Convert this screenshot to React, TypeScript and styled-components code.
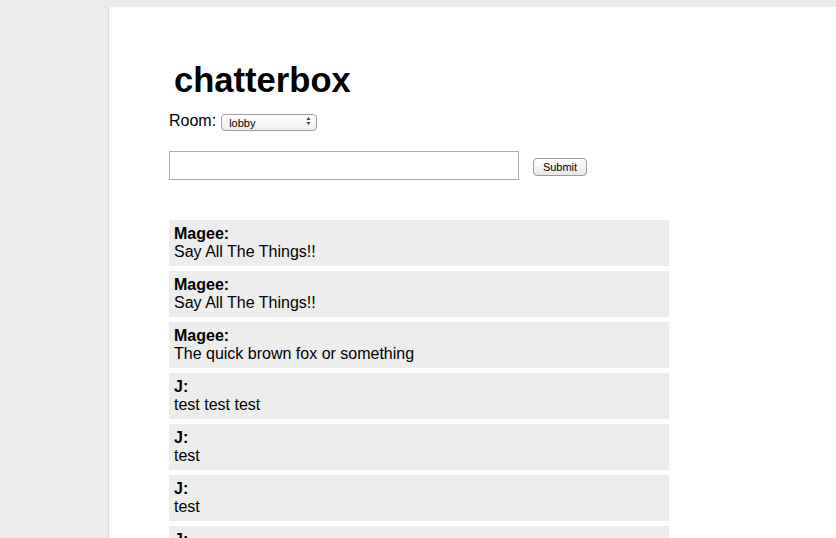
import React from "react";
import styled, { createGlobalStyle } from "styled-components";

const Global = createGlobalStyle`
  html, body {
    margin: 0;
    padding: 0;
    background: #ececec;
    font-family: "Liberation Sans", Arial, Helvetica, sans-serif;
    color: #000;
  }
`;

const Page = styled.div`
  width: 620px;
  min-height: 560px;
  margin: 7px 0 0 108px;
  background: #fff;
  border-left: 1px solid #dcdcdc;
  border-right: 1px solid #dcdcdc;
  padding: 53px 60px 0 60px;
  box-sizing: content-box;
`;

const Title = styled.h1`
  margin: 0 0 0 5px;
  font-size: 34.6px;
  font-weight: bold;
  line-height: 40px;
`;

const RoomRow = styled.div`
  display: flex;
  align-items: center;
  gap: 5px;
  font-size: 16px;
  height: 20px;
  margin-top: 11px;
`;

const SelectWrap = styled.div`
  position: relative;
  width: 96px;
  height: 17px;
`;

const Select = styled.select`
  appearance: none;
  -webkit-appearance: none;
  width: 100%;
  height: 100%;
  box-sizing: border-box;
  border: 1px solid #9c9c9c;
  border-radius: 4px;
  background: linear-gradient(#ffffff, #ededed);
  font-family: "Liberation Sans", Arial, sans-serif;
  font-size: 11px;
  padding: 0 0 0 7px;
  color: #000;
  outline: none;
`;

const Arrows = styled.span`
  position: absolute;
  right: 6px;
  top: 3px;
  pointer-events: none;
  display: flex;
`;

const Form = styled.form`
  display: flex;
  align-items: center;
  gap: 14px;
  margin-top: 20px;
`;

const TextInput = styled.input`
  width: 350px;
  height: 29px;
  box-sizing: border-box;
  border: 1px solid #ababab;
  margin: 0;
  padding: 2px 4px;
  font-size: 14px;
  outline: none;
`;

const SubmitButton = styled.button`
  width: 54px;
  height: 18px;
  box-sizing: border-box;
  border: 1px solid #9a9a9a;
  border-radius: 4px;
  background: linear-gradient(#ffffff, #e8e8e8);
  font-family: "Liberation Sans", Arial, sans-serif;
  font-size: 11px;
  padding: 0;
  color: #000;
  margin-top: 2px;
`;

const Messages = styled.div`
  display: flex;
  flex-direction: column;
  gap: 5px;
  margin-top: 40px;
  width: 500px;
`;

const Message = styled.div`
  background: #ededed;
  padding: 5px 5px 5px 5px;
  font-size: 16px;
  line-height: 18px;
  height: 46px;
  box-sizing: border-box;
`;

const Name = styled.div`
  font-weight: bold;
`;

const Text = styled.div``;

const messages = [
  { name: "Magee", text: "Say All The Things!!" },
  { name: "Magee", text: "Say All The Things!!" },
  { name: "Magee", text: "The quick brown fox or something" },
  { name: "J", text: "test test test" },
  { name: "J", text: "test" },
  { name: "J", text: "test" },
  { name: "J", text: "test" },
];

export default function App() {
  return (
    <>
      <Global />
      <Page>
        <Title>chatterbox</Title>
        <RoomRow>
          <span>Room:</span>
          <SelectWrap>
            <Select defaultValue="lobby">
              <option value="lobby">lobby</option>
            </Select>
            <Arrows>
              <svg width="5" height="10" viewBox="0 0 5 10">
                <path d="M0.5 4 L2.5 1 L4.5 4 Z" fill="#444" />
                <path d="M0.5 6 L2.5 9 L4.5 6 Z" fill="#444" />
              </svg>
            </Arrows>
          </SelectWrap>
        </RoomRow>
        <Form onSubmit={(e) => e.preventDefault()}>
          <TextInput type="text" />
          <SubmitButton type="submit">Submit</SubmitButton>
        </Form>
        <Messages>
          {messages.map((m, i) => (
            <Message key={i}>
              <Name>{m.name}:</Name>
              <Text>{m.text}</Text>
            </Message>
          ))}
        </Messages>
      </Page>
    </>
  );
}
